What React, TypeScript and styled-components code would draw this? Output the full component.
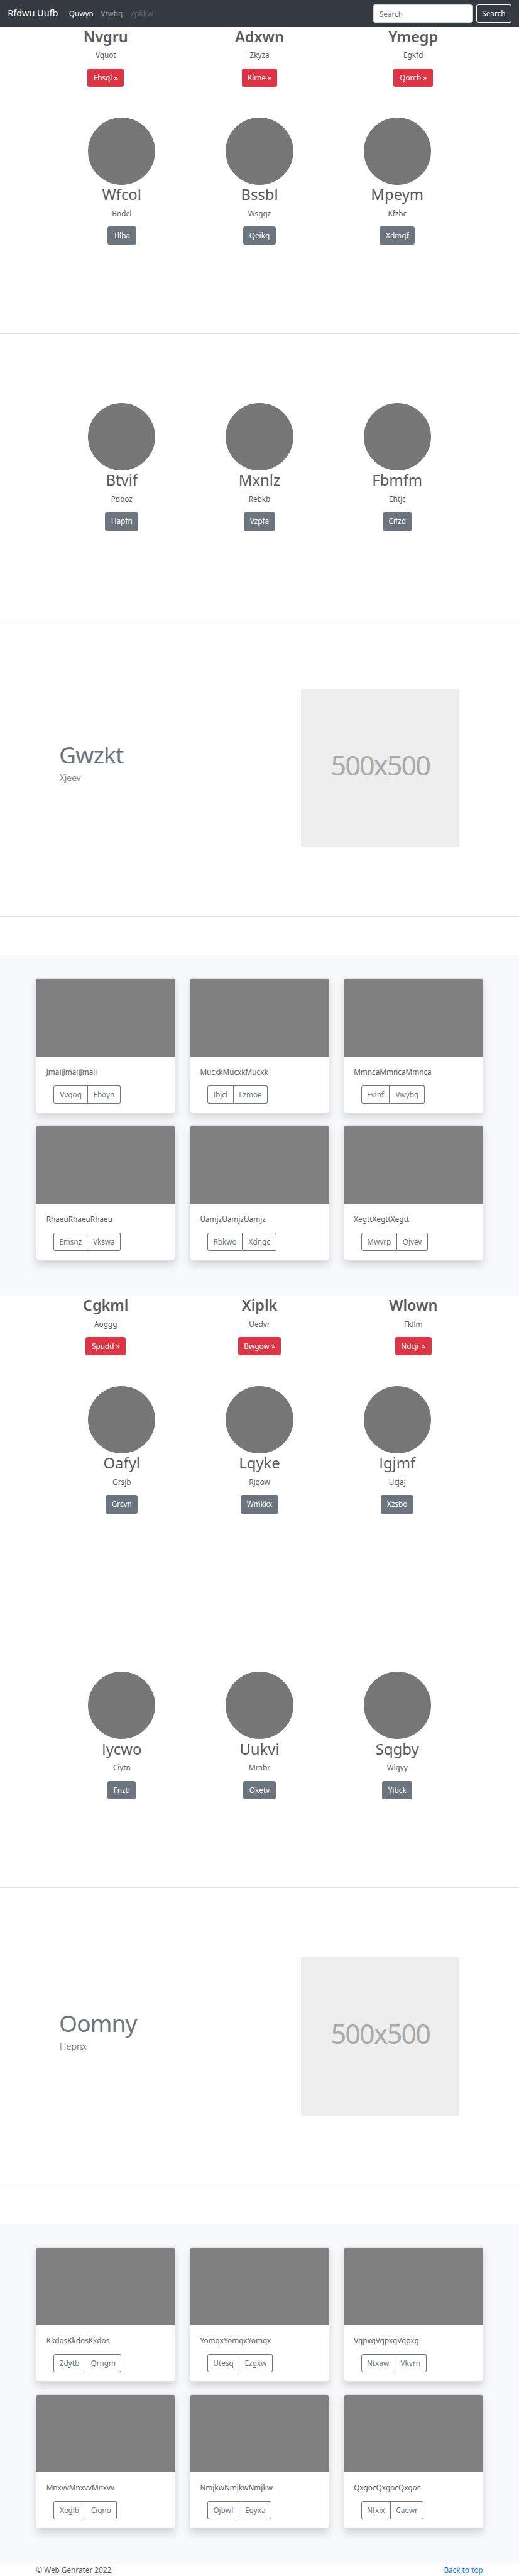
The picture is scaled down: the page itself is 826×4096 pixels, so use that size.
import React from "react";
import styled, { createGlobalStyle } from "styled-components";

const u = (n: number) => `${(n * 0.76484).toFixed(3)}px`;

const Global = createGlobalStyle`
  *, *::before, *::after { box-sizing: border-box; }
  body {
    margin: 0;
    background: #fff;
    color: #5a5a5a;
    font-family: "Noto Sans", "Open Sans", sans-serif;
    font-size: ${u(15.4)};
    line-height: ${u(24)};
  }
  h2, p { margin: 0; }
  a { text-decoration: none; color: inherit; }
`;

const Navbar = styled.nav`
  display: flex;
  align-items: center;
  height: ${u(56)};
  padding: 0 ${u(16)};
  background: #343a40;
  color: #fff;
`;
const Brand = styled.a`
  width: ${u(119.5)};
  font-size: ${u(18.9)};
  line-height: ${u(32)};
  white-space: nowrap;
`;
const NavLinks = styled.div`
  display: flex;
  flex: 1;
`;
const NavLink = styled.a<{ $alpha: number; $width: number }>`
  width: ${(p) => u(p.$width)};
  padding-left: ${u(8)};
  line-height: ${u(25)};
  color: rgba(255, 255, 255, ${(p) => p.$alpha});
`;
const SearchInput = styled.input`
  width: ${u(207)};
  height: ${u(38)};
  margin-right: ${u(8)};
  padding: ${u(2)} ${u(12)} 0;
  border: 1px solid #ced4da;
  border-radius: ${u(4)};
  font: inherit;
  &::placeholder { color: #6c757d; opacity: 1; }
`;

const tones = { danger: "#dc3545", secondary: "#6c757d", clear: "transparent" };
const Button = styled.a<{ $tone: keyof typeof tones; $width: number }>`
  display: inline-block;
  width: ${(p) => u(p.$width)};
  height: ${u(38)};
  border: 1px solid ${(p) => (p.$tone === "clear" ? "#f8f9fa" : tones[p.$tone])};
  border-radius: ${u(4)};
  background: ${(p) => tones[p.$tone]};
  color: #fff;
  line-height: calc(${u(38)} - 2px);
  text-align: center;
  white-space: nowrap;
`;

const PromoRow = styled.section`
  display: grid;
  grid-template-columns: repeat(3, 1fr);
  height: ${u(140.4)};
  padding: 0 ${u(60)};
  text-align: center;
`;
const Title = styled.h2<{ $bold?: boolean }>`
  height: ${u(46.4)};
  font-size: ${(p) => u(p.$bold ? 30.6 : 31.2)};
  font-weight: ${(p) => (p.$bold ? 600 : 400)};
  line-height: ${u(40)};
`;
const Caption = styled.p`
  height: ${u(40)};
  line-height: ${u(24.6)};
`;
const ProfileRow = styled.section<{ $height: number; $top: number }>`
  display: grid;
  grid-template-columns: repeat(3, 1fr);
  height: ${(p) => u(p.$height)};
  padding: ${(p) => u(p.$top)} ${u(110)} 0;
  text-align: center;
`;
const Avatar = styled.div`
  width: ${u(140)};
  height: ${u(140)};
  margin: 0 auto ${u(0.6)};
  border-radius: 50%;
  background: #777;
`;
const Divider = styled.hr`
  height: 1px;
  margin: 0;
  border: 0;
  background: #e5e5e5;
`;
const Featurette = styled.section`
  display: flex;
  justify-content: space-between;
  align-items: center;
  height: ${u(616.8)};
  padding: 0 ${u(124)} 0 ${u(125)};
`;
const FeatureText = styled.div`
  padding-bottom: ${u(21.6)};
`;
const FeatureTitle = styled.h2`
  padding-top: ${u(1)};
  font-size: ${u(48.5)};
  font-weight: 400;
  line-height: ${u(60)};
  letter-spacing: -0.024em;
  margin-left: ${u(-2)};
  color: #6c757d;
`;
const Lead = styled.p`
  margin: ${u(4)} 0 0 ${u(-0.7)};
  font-size: ${u(18.8)};
  font-weight: 300;
  line-height: ${u(30)};
`;
const Placeholder = styled.div`
  display: flex;
  align-items: center;
  justify-content: center;
  width: ${u(329.2)};
  height: ${u(329.2)};
  padding-bottom: ${u(9)};
  background: #eee;
  color: #aaa;
  font-size: ${u(56.4)};
  letter-spacing: -0.044em;
`;
const Album = styled.section`
  height: ${u(708)};
  padding: ${u(48)} ${u(75)} 0;
  background: #f8f9fa;
`;
const AlbumGrid = styled.div`
  display: grid;
  grid-template-columns: repeat(3, 1fr);
  column-gap: ${u(30)};
  row-gap: ${u(25)};
`;
const Card = styled.article`
  height: ${u(281)};
  border: 1px solid rgba(0, 0, 0, 0.125);
  border-radius: ${u(4)};
  background: #fff;
  box-shadow: 0 ${u(8)} ${u(16)} rgba(0, 0, 0, 0.15);
`;
const Thumb = styled.div`
  height: ${u(161.4)};
  border-radius: ${u(3)} ${u(3)} 0 0;
  background: #808080;
`;
const CardBody = styled.div`
  padding: ${u(20)} ${u(20)} 0;
`;
const ButtonGroup = styled.div`
  display: flex;
  margin-left: ${u(15)};
`;
const GroupButton = styled.a<{ $width: number }>`
  width: ${(p) => u(p.$width)};
  height: ${u(38)};
  border: 1px solid #6c757d;
  color: #6c757d;
  text-align: center;
  line-height: calc(${u(38)} - 2px);
  &:first-child { border-radius: ${u(4)} 0 0 ${u(4)}; }
  &:last-child { border-left: 0; border-radius: 0 ${u(4)} ${u(4)} 0; }
`;
const Spacer = styled.div`
  height: ${u(79.8)};
`;
const Footer = styled.footer`
  display: flex;
  justify-content: space-between;
  height: ${u(24)};
  padding: 0 ${u(75)};
  line-height: ${u(25)};
`;
const TopLink = styled.a`
  color: #007bff;
`;

const PlainI = styled.span`
  font-family: "Open Sans", sans-serif;
  line-height: 1;
`;
function Label({ text }: { text: string }) {
  return text.startsWith("I") ? (
    <>
      <PlainI>I</PlainI>
      {text.slice(1)}
    </>
  ) : (
    <>{text}</>
  );
}

type Item = [title: string, text: string, button: string, width: number];
type CardItem = [text: string, left: string, leftWidth: number, right: string, rightWidth: number];
interface HalfData {
  promos: Item[];
  profiles: Item[][];
  feature: [string, string];
  cards: CardItem[];
}

const halves: HalfData[] = [
  {
    promos: [
      ["Nvgru", "Vquot", "Fhsql »", 76.2],
      ["Adxwn", "Zkyza", "Klrne »", 74.4],
      ["Ymegp", "Egkfd", "Qorcb »", 82],
    ],
    profiles: [
      [
        ["Wfcol", "Bndcl", "Tllba", 60],
        ["Bssbl", "Wsggz", "Qeikq", 67.5],
        ["Mpeym", "Kfzbc", "Xdmqf", 73],
      ],
      [
        ["Btvif", "Pdboz", "Hapfn", 69],
        ["Mxnlz", "Rebkb", "Vzpfa", 66.1],
        ["Fbmfm", "Ehtjc", "Cifzd", 61.3],
      ],
    ],
    feature: ["Gwzkt", "Xjeev"],
    cards: [
      ["JmaiiJmaiiJmaii", "Vvqoq", 71.8, "Fboyn", 68],
      ["MucxkMucxkMucxk", "Ibjcl", 54.8, "Lzmoe", 71],
      ["MmncaMmncaMmnca", "Evinf", 60, "Vwybg", 73],
      ["RhaeuRhaeuRhaeu", "Emsnz", 71, "Vkswa", 69],
      ["UamjzUamjzUamjz", "Rbkwo", 73.8, "Xdngc", 70.4],
      ["XegttXegttXegtt", "Mwvrp", 75, "Ojvev", 64.2],
    ],
  },
  {
    promos: [
      ["Cgkml", "Aoggg", "Spudd »", 84],
      ["Xiplk", "Uedvr", "Bwgow »", 89.5],
      ["Wlown", "Fkllm", "Ndcjr »", 76.4],
    ],
    profiles: [
      [
        ["Oafyl", "Grsjb", "Grcvn", 66.8],
        ["Lqyke", "Rjqow", "Wmkkx", 78.5],
        ["Igjmf", "Ucjaj", "Xzsbo", 68.2],
      ],
      [
        ["Iycwo", "Ciytn", "Fnzti", 58.5],
        ["Uukvi", "Mrabr", "Oketv", 67.5],
        ["Sqgby", "Wigyy", "Yibck", 62.7],
      ],
    ],
    feature: ["Oomny", "Hepnx"],
    cards: [
      ["KkdosKkdosKkdos", "Zdytb", 66.5, "Qrngm", 75],
      ["YomqxYomqxYomqx", "Utesq", 67, "Ezgxw", 69],
      ["VqpxgVqpxgVqpxg", "Ntxaw", 70.5, "Vkvrn", 66],
      ["MnxvvMnxvvMnxvv", "Xeglb", 66.5, "Ciqno", 66],
      ["NmjkwNmjkwNmjkw", "Ojbwf", 67.5, "Eqyxa", 66],
      ["QxgocQxgocQxgoc", "Nfxix", 62, "Caewr", 68],
    ],
  },
];

const rowSizes = [
  { height: 496.6, top: 47.6 },
  { height: 592, top: 143.6 },
];

function Half({ data }: { data: HalfData }) {
  return (
    <>
      <PromoRow>
        {data.promos.map(([title, text, button, width]) => (
          <div key={title}>
            <Title $bold>{title}</Title>
            <Caption>{text}</Caption>
            <Button $tone="danger" $width={width}>{button}</Button>
          </div>
        ))}
      </PromoRow>
      {data.profiles.map((row, i) => (
        <React.Fragment key={i}>
          <ProfileRow $height={rowSizes[i].height} $top={rowSizes[i].top}>
            {row.map(([title, text, button, width]) => (
              <div key={title}>
                <Avatar />
                <Title><Label text={title} /></Title>
                <Caption>{text}</Caption>
                <Button $tone="secondary" $width={width}>{button}</Button>
              </div>
            ))}
          </ProfileRow>
          <Divider />
        </React.Fragment>
      ))}
      <Featurette>
        <FeatureText>
          <FeatureTitle>{data.feature[0]}</FeatureTitle>
          <Lead>{data.feature[1]}</Lead>
        </FeatureText>
        <Placeholder>500x500</Placeholder>
      </Featurette>
      <Divider />
      <Spacer />
      <Album>
        <AlbumGrid>
          {data.cards.map(([text, left, lw, right, rw]) => (
            <Card key={text}>
              <Thumb />
              <CardBody>
                <Caption>{text}</Caption>
                <ButtonGroup>
                  <GroupButton $width={lw}><Label text={left} /></GroupButton>
                  <GroupButton $width={rw}>{right}</GroupButton>
                </ButtonGroup>
              </CardBody>
            </Card>
          ))}
        </AlbumGrid>
      </Album>
    </>
  );
}

export default function App() {
  return (
    <>
      <Global />
      <Navbar>
        <Brand>Rfdwu Uufb</Brand>
        <NavLinks>
          <NavLink $alpha={1} $width={66}>Quwyn</NavLink>
          <NavLink $alpha={0.5} $width={62}>Vtwbg</NavLink>
          <NavLink $alpha={0.25} $width={62}>Zpkkw</NavLink>
        </NavLinks>
        <SearchInput placeholder="Search" />
        <Button $tone="clear" $width={73}>Search</Button>
      </Navbar>
      {halves.map((data, i) => (
        <Half key={i} data={data} />
      ))}
      <Footer>
        <span>© Web Genrater 2022</span>
        <TopLink>Back to top</TopLink>
      </Footer>
    </>
  );
}
